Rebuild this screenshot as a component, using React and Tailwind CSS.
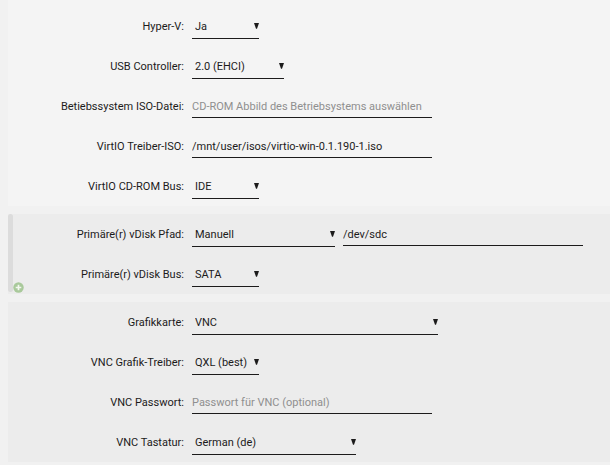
import React from 'react';
import clsx from 'clsx';

const Row = ({ id, label, children }) => (
  <div className="flex h-10 items-center gap-2">
    <label htmlFor={id} className="w-44 shrink-0 pt-0.5 text-right">
      {label}
    </label>
    {children}
  </div>
);

const Select = ({ id, value, options = [], width, label }) => (
  <span className={clsx('relative block', width)}>
    <select
      id={id}
      aria-label={label}
      defaultValue={value}
      className="block h-[26px] w-full appearance-none border-b border-[#1c1b1b] bg-transparent pl-[3px] pr-2 pt-1 outline-none"
    >
      {[value, ...options].map((option) => (
        <option key={option}>{option}</option>
      ))}
    </select>
    <svg viewBox="0 0 5 6" className="pointer-events-none absolute right-0 top-[10px] h-[6px] w-[5px]" aria-hidden="true">
      <path d="M0 0h5L3 5.8H2z" fill="#1c1b1b" />
    </svg>
  </span>
);

const TextField = ({ type = 'text', ...props }) => (
  <input
    type={type}
    className="block h-6 w-60 min-w-0 border-b border-[#1c1b1b] bg-transparent pt-0.5 outline-none placeholder:text-[#8f8f8f]"
    {...props}
  />
);

export default function App() {
  return (
    <form className="flex min-h-screen flex-col gap-2 bg-[#f1f1f1] pb-1 pl-2 font-['Roboto',sans-serif] text-[11px] text-[#1c1b1b]">
      <section className="bg-[#f4f4f4] pt-1.5">
        <Row id="hyperv" label="Hyper-V:">
          <Select id="hyperv" value="Ja" options={['Nein']} width="w-[67px]" />
        </Row>
        <Row id="usb" label="USB Controller:">
          <Select id="usb" value="2.0 (EHCI)" options={['3.0 (nec XHCI)', '3.0 (qemu XHCI)']} width="w-[92px]" />
        </Row>
        <Row id="os-iso" label="Betiebssystem ISO-Datei:">
          <TextField id="os-iso" placeholder="CD-ROM Abbild des Betriebsystems auswählen" />
        </Row>
        <Row id="virtio-iso" label="VirtIO Treiber-ISO:">
          <TextField id="virtio-iso" defaultValue="/mnt/user/isos/virtio-win-0.1.190-1.iso" />
        </Row>
        <Row id="cdrom-bus" label="VirtIO CD-ROM Bus:">
          <Select id="cdrom-bus" value="IDE" options={['SATA', 'SCSI', 'USB']} width="w-[67px]" />
        </Row>
      </section>

      <section className="relative bg-[#ececec]">
        <span className="absolute left-0 top-0 h-[78px] w-[5px] rounded-sm bg-[#dcdcdc]" />
        <button type="button" aria-label="vDisk hinzufügen" className="absolute bottom-px left-[5px] size-[11px]">
          <svg viewBox="0 0 11 11" className="block size-full">
            <circle cx="5.5" cy="5.5" r="5.2" fill="#a9c99b" />
            <path d="M5.5 2.7v5.6M2.7 5.5h5.6" stroke="#f3f7f0" strokeWidth="1.7" />
          </svg>
        </button>
        <Row id="vdisk-path" label="Primäre(r) vDisk Pfad:">
          <Select id="vdisk-path" value="Manuell" options={['Auto', 'Keine']} width="w-[143px]" />
          <TextField aria-label="vDisk Pfad" defaultValue="/dev/sdc" />
        </Row>
        <Row id="vdisk-bus" label="Primäre(r) vDisk Bus:">
          <Select id="vdisk-bus" value="SATA" options={['IDE', 'SCSI', 'VirtIO']} width="w-[67px]" />
        </Row>
      </section>

      <section className="bg-[#ececec]">
        <Row id="gpu" label="Grafikkarte:">
          <Select id="gpu" value="VNC" width="w-[246px]" />
        </Row>
        <Row id="vnc-driver" label="VNC Grafik-Treiber:">
          <Select id="vnc-driver" value="QXL (best)" options={['Cirrus', 'vmvga']} width="w-[67px]" />
        </Row>
        <Row id="vnc-password" label="VNC Passwort:">
          <TextField id="vnc-password" type="password" placeholder="Passwort für VNC (optional)" />
        </Row>
        <Row id="vnc-keyboard" label="VNC Tastatur:">
          <Select id="vnc-keyboard" value="German (de)" options={['English (en-us)']} width="w-[164px]" />
        </Row>
      </section>
    </form>
  );
}
